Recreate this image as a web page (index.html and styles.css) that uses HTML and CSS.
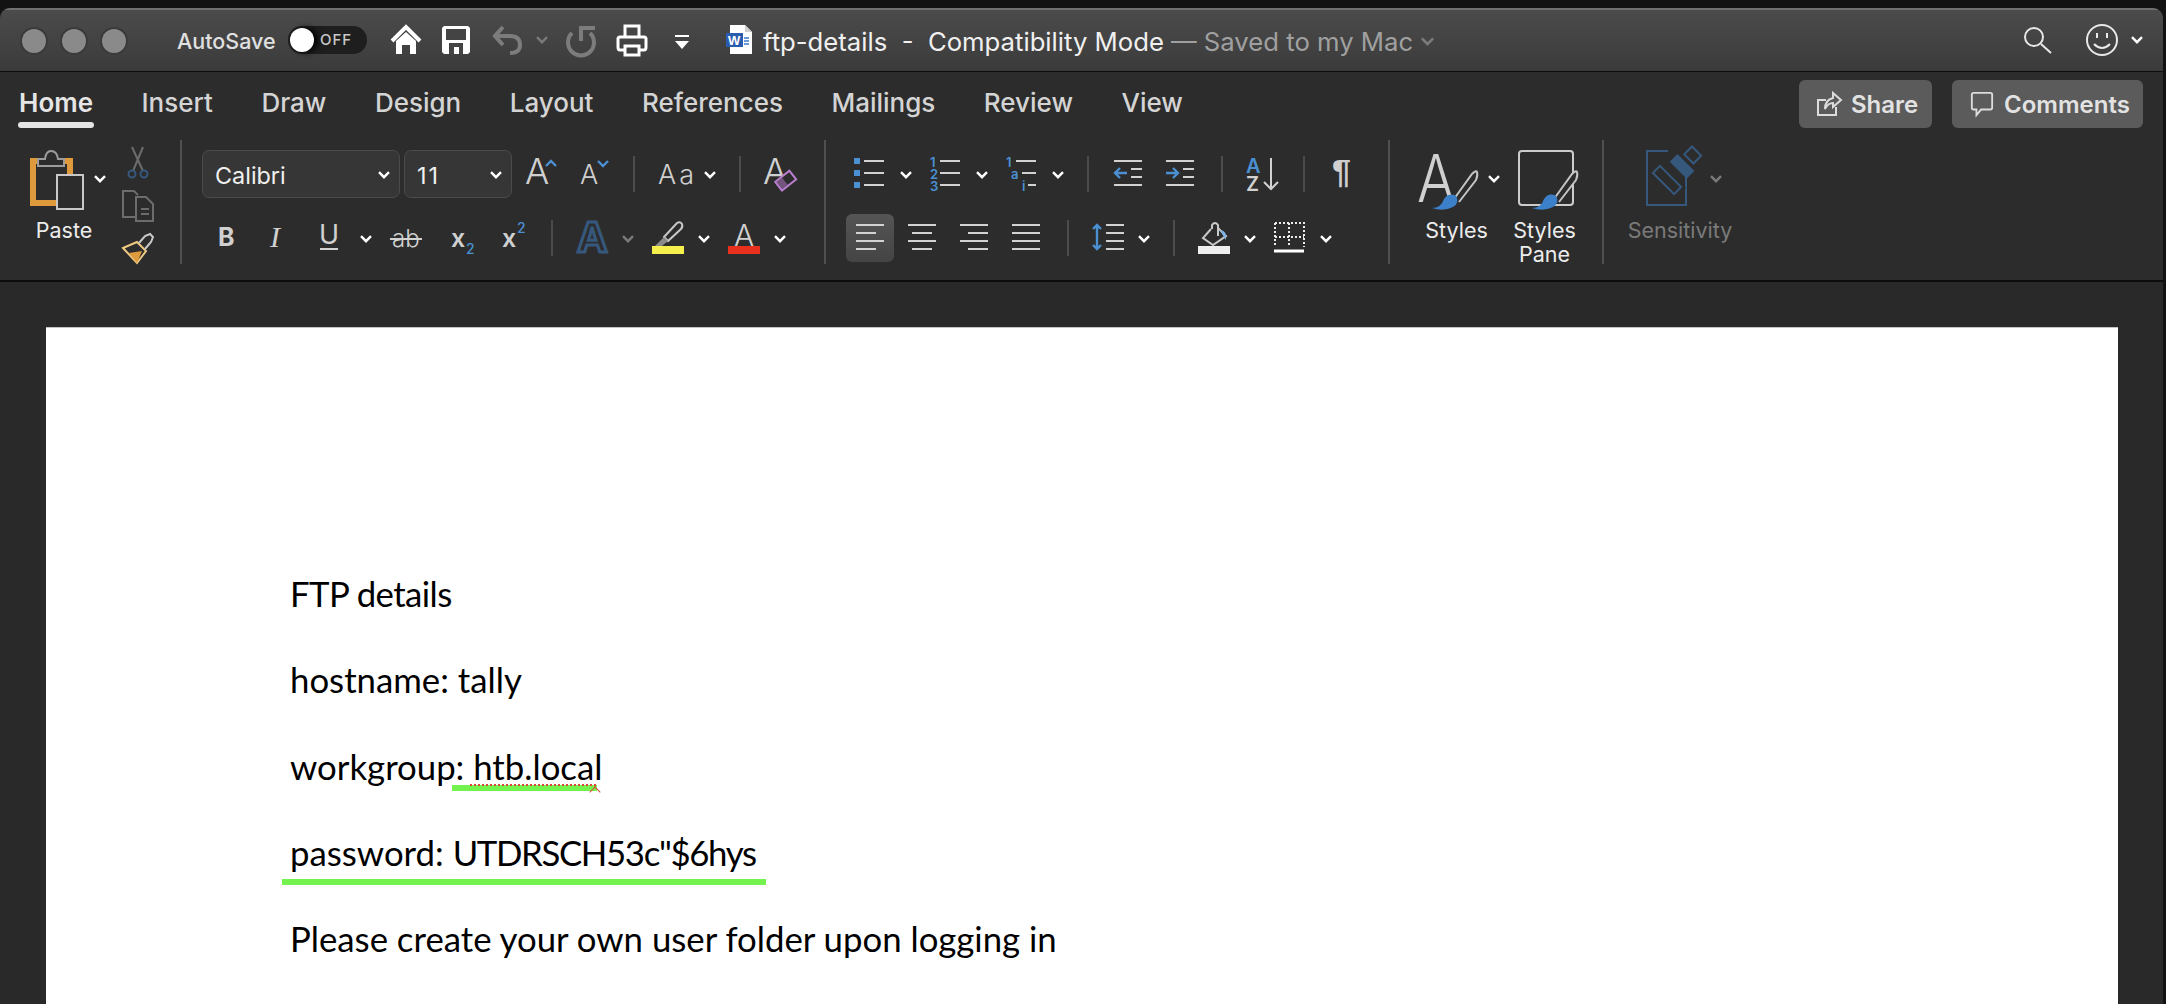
FILE: index.html
```html
<!DOCTYPE html>
<html lang="en">
<head>
	<meta charset="UTF-8">
	<title>ftp-details - Compatibility Mode</title>
	<link rel="stylesheet" href="styles.css">
</head>
<body>
	<svg class="defs" width="0" height="0">
		<symbol id="chev" viewBox="0 0 12 8"><path d="M1 1.2 L6 6.2 L11 1.2"/></symbol>
		<g id="brush">
			<path class="brush-handle" d="M1454 199 L1472 174 Q1476 170 1477 172 Q1478 175 1476 180 L1459 202"/>
			<path class="brush-head" d="M1432 208 Q1441 208 1444 199 Q1449 192 1456 196 Q1460 203 1453 207 Q1443 212 1432 208Z"/>
		</g>
	</svg>

	<div class="window">
		<header class="titlebar">
			<div class="lights"><span></span><span></span><span></span></div>
			<span class="autosave">AutoSave</span>
			<div class="toggle-cell">
				<div class="toggle"><i></i><b>OFF</b></div>
			</div>
			<svg class="tb-icon" viewBox="390 8 52 63"><path class="ic-white" d="M392 41 L406 27 L420 41"/><path class="fill-white" d="M396 41 L406 32 L416 41 V54 H410 V45 H402 V54 H396Z"/></svg>
			<svg class="tb-icon" viewBox="442 8 50 63"><path class="fill-white" d="M444 26 H468 L470 28 V52 L468 54 H444 L442 52 V28Z"/><rect class="fill-bar" x="446" y="29" width="20" height="11"/><path class="fill-bar" d="M449 54 V43 H463 V54 H459 V47 H454 V54Z"/></svg>
			<svg class="tb-icon" viewBox="492 8 74 63"><path class="ic-dim" d="M503 27 L495 36 L503 45 M496 36 H510 Q520 36 520 45 Q520 53 510 53"/><use class="chev chev-dim" href="#chev" x="536" y="36" width="12" height="8"/></svg>
			<svg class="tb-icon" viewBox="566 8 50 63"><path class="ic-dim" d="M595 28 H581 V41 M572 33 A13 13 0 1 0 590 33"/></svg>
			<svg class="tb-icon" viewBox="616 8 59 63"><path class="ic-white ic-thin" d="M625 36 V26 H639 V36 M625 50 H620 Q618 50 618 47 V39 Q618 37 620 37 H644 Q646 37 646 39 V47 Q646 50 644 50 H639 M625 46 H639 V55 H625Z"/></svg>
			<svg class="tb-icon" viewBox="675 8 51 63"><rect class="fill-white" x="675" y="35" width="14" height="2"/><path class="fill-white" d="M675 41 H689 L682 49Z"/></svg>
			<svg class="tb-icon" viewBox="726 8 37 63"><path class="fill-white" d="M730 25 H745 L752 32 V54 H730Z"/><path class="fold" d="M745 25 L752 32 H745Z"/><rect class="word-blue" x="726" y="33" width="17" height="14"/><text class="word-w" x="728" y="45">W</text><path class="word-lines" d="M744 38 H749 M744 41 H749 M744 44 H749"/></svg>
			<div class="doc-title"><span>ftp-details&nbsp; -&nbsp; Compatibility Mode</span><em>— Saved to my Mac</em>
				<svg class="title-chev"><use class="chev chev-dim" href="#chev" width="17" height="9"/></svg>
			</div>
			<svg class="tb-icon" viewBox="2024 8 62 63"><circle class="ic-thin-w" cx="2034" cy="37" r="9"/><path class="ic-thin-w" d="M2041 44 L2051 53"/></svg>
			<svg class="tb-icon" viewBox="2086 8 77 63"><circle class="ic-thin-w" cx="2102" cy="40" r="15"/><path class="ic-thin-w" d="M2097 33 V38 M2107 33 V38 M2094 44 Q2102 52 2110 44"/><use class="chev" href="#chev" x="2131" y="36" width="12" height="8"/></svg>
		</header>

		<nav class="tabs">
			<a class="tab tab-on">Home</a>
			<a class="tab">Insert</a>
			<a class="tab">Draw</a>
			<a class="tab">Design</a>
			<a class="tab">Layout</a>
			<a class="tab">References</a>
			<a class="tab">Mailings</a>
			<a class="tab">Review</a>
			<a class="tab">View</a>
			<div class="tab-btns">
				<button class="rbtn btn-share">
					<svg viewBox="0 0 24 24"><path d="M9 8 H1 V23 H19 V15 M8 17 Q8 8 16 6 V1 L24 8 L16 15 V11 Q11 11 8 17Z"/></svg>
					Share
				</button>
				<button class="rbtn btn-comments">
					<svg viewBox="0 0 24 26"><path d="M3 1 H21 Q23 1 23 3 V17 Q23 19 21 19 H11 L6 25 V19 H3 Q1 19 1 17 V3 Q1 1 3 1Z"/></svg>
					Comments
				</button>
			</div>
		</nav>

		<section class="ribbon">
			<div class="group g-clip">
				<div class="big">
					<svg class="big-icon" viewBox="0 140 122 78">
						<path class="clip-frame" d="M38 161 H33 V203 H56 M64 161 H70 V174"/>
						<path class="ic-clip" d="M38 159 H45 Q46 151 51 151 Q57 151 58 159 H64 V166 H38Z"/>
						<rect class="paper" x="57" y="175" width="26" height="34"/>
						<use class="chev" href="#chev" x="94" y="175" width="12" height="8"/>
					</svg>
					<span class="big-label">Paste</span>
				</div>
				<svg class="clip-tools" viewBox="122 140 58 124">
					<path class="ic-grey" d="M132 147 L143 171 M143 147 L133 171"/>
					<circle class="ic-sens" cx="132" cy="174" r="3.5"/><circle class="ic-sens" cx="144" cy="174" r="3.5"/>
					<path class="ic-grey" d="M135 217 H123 V191 H134 L138 195 M136 197 H146 L153 204 V221 H136Z M141 209 H149 M141 214 H149"/>
					<path class="painter" d="M123 248 L137 242 L146 251 L137 263Z"/>
					<path class="painter-fill" d="M129 253 L142 251 L137 263Z"/>
					<path class="ic-lite" d="M139 243 L145 236 L150 234 L153 237 L151 242 L145 249"/>
				</svg>
			</div>

			<div class="group g-font">
				<div class="row font-r1">
					<div class="combo combo-font">Calibri<svg class="combo-chev"><use class="chev" href="#chev" width="12" height="8"/></svg></div>
					<div class="combo combo-size"><span class="size-num">11</span><svg class="combo-chev"><use class="chev" href="#chev" width="12" height="8"/></svg></div>
					<svg viewBox="526 150 55 48"><text class="glyph thin t36" x="525" y="184">A</text><path class="ic-blue" d="M546 166 L551 161 L556 166"/></svg>
					<svg viewBox="581 150 52 48"><text class="glyph thin t27" x="580" y="184">A</text><path class="ic-blue" d="M598 161 L603 166 L608 161"/></svg>
					<span class="vsep"></span>
					<svg viewBox="659 150 80 48"><text class="glyph thin t27 spaced" x="658" y="184">Aa</text><use class="chev" href="#chev" x="704" y="171" width="12" height="8"/></svg>
					<span class="vsep"></span>
					<svg viewBox="764 150 40 48"><text class="glyph thin t36" x="763" y="184">A</text><g transform="rotate(-38 786 181)"><rect class="eraser" x="777" y="175" width="18" height="11"/><rect class="eraser-fill" x="778" y="176" width="7" height="9"/></g></svg>
				</div>
				<div class="row font-r2">
					<svg viewBox="202 214 60 48"><text class="glyph bold t25" x="218" y="246">B</text></svg>
					<svg viewBox="262 214 50 48"><text class="serif-i" x="270" y="247">I</text></svg>
					<svg viewBox="312 214 70 48"><text class="glyph t27" x="319" y="244">U</text><path class="ic-line" d="M320 249 H338"/><use class="chev" href="#chev" x="360" y="235" width="12" height="8"/></svg>
					<svg viewBox="382 214 61 48"><text class="glyph thin t24" x="392" y="247">ab</text><path class="ic-line" d="M390 239 H422"/></svg>
					<svg viewBox="443 214 52 48"><text class="glyph semi t25" x="451" y="247">x</text><text class="num t14w" x="466" y="254">2</text></svg>
					<svg viewBox="495 214 56 48"><text class="glyph semi t25" x="502" y="247">x</text><text class="num t14w" x="517" y="233">2</text></svg>
					<span class="vsep"></span>
					<svg viewBox="577 214 75 48"><text class="outline-a" x="577" y="252">A</text><use class="chev chev-dim" href="#chev" x="622" y="235" width="12" height="8"/></svg>
					<svg viewBox="652 214 76 48"><path class="ic-lite" d="M664 237 L677 223 Q680 221 682 224 Q683 227 681 229 L668 241Z"/><path class="fill-grey" d="M664 237 L668 241 L662 246 L655 246Z"/><rect class="bar-yellow" x="652" y="246" width="32" height="8"/><use class="chev" href="#chev" x="698" y="235" width="12" height="8"/></svg>
					<svg viewBox="728 214 72 48"><text class="glyph thin t30" x="734" y="246">A</text><rect class="bar-red" x="728" y="246" width="32" height="8"/><use class="chev" href="#chev" x="774" y="235" width="12" height="8"/></svg>
				</div>
			</div>

			<div class="group g-para">
				<div class="row para-r1">
					<svg viewBox="846 150 76 48"><rect class="fill-blue" x="854" y="158" width="6" height="6"/><rect class="fill-blue" x="854" y="170" width="6" height="6"/><rect class="fill-blue" x="854" y="182" width="6" height="6"/><path class="ic-line" d="M864 161 H884 M864 173 H884 M864 185 H884"/><use class="chev" href="#chev" x="900" y="171" width="12" height="8"/></svg>
					<svg viewBox="922 150 78 48"><text class="num t14" x="930" y="167">1</text><text class="num t14" x="930" y="179">2</text><text class="num t14" x="930" y="191">3</text><path class="ic-line" d="M940 161 H960 M940 173 H960 M940 185 H960"/><use class="chev" href="#chev" x="976" y="171" width="12" height="8"/></svg>
					<svg viewBox="1000 150 87 48"><text class="num t14" x="1006" y="167">1</text><text class="num t14" x="1011" y="179">a</text><text class="num t14" x="1022" y="191">i</text><path class="ic-line" d="M1016 161 H1036 M1022 173 H1036 M1028 185 H1036"/><use class="chev" href="#chev" x="1052" y="171" width="12" height="8"/></svg>
					<span class="vsep"></span>
					<svg viewBox="1113 150 52 48"><path class="ic-line" d="M1114 161 H1142 M1131 169 H1142 M1131 177 H1142 M1114 185 H1142"/><path class="ic-blue" d="M1127 173 H1115 M1120 168 L1115 173 L1120 178"/></svg>
					<svg viewBox="1165 150 56 48"><path class="ic-line" d="M1166 161 H1194 M1183 169 H1194 M1183 177 H1194 M1166 185 H1194"/><path class="ic-blue" d="M1166 173 H1178 M1173 168 L1178 173 L1173 178"/></svg>
					<span class="vsep"></span>
					<svg viewBox="1246 150 57 48"><text class="sort-a" x="1246" y="173">A</text><text class="sort-z" x="1246" y="191">Z</text><path class="ic-line" d="M1271 158 V189 M1264 182 L1271 189 L1278 182"/></svg>
					<span class="vsep"></span>
					<svg viewBox="1334 150 55 48"><text class="pilcrow" x="1332" y="183">¶</text></svg>
				</div>
				<div class="row para-r2">
					<div class="align-on"><svg viewBox="846 214 48 48"><path class="ic-line" d="M856 225 H884 M856 233 H876 M856 241 H884 M856 249 H876"/></svg></div>
					<svg viewBox="898 214 52 48"><path class="ic-line" d="M908 225 H936 M912 233 H932 M908 241 H936 M912 249 H932"/></svg>
					<svg viewBox="950 214 52 48"><path class="ic-line" d="M960 225 H988 M968 233 H988 M960 241 H988 M968 249 H988"/></svg>
					<svg viewBox="1002 214 65 48"><path class="ic-line" d="M1012 225 H1040 M1012 233 H1040 M1012 241 H1040 M1012 249 H1040"/></svg>
					<span class="vsep"></span>
					<svg viewBox="1092 214 81 48"><path class="ic-blue" d="M1097 225 V249 M1093 229 L1097 225 L1101 229 M1093 245 L1097 249 L1101 245"/><path class="ic-line" d="M1106 225 H1124 M1106 233 H1124 M1106 241 H1124 M1106 249 H1124"/><use class="chev" href="#chev" x="1138" y="235" width="12" height="8"/></svg>
					<span class="vsep"></span>
					<svg viewBox="1198 214 72 48"><path class="ic-lite" d="M1212 229 V225 Q1215 221 1218 225 V236 M1211 229 L1203 238 L1213 245 L1226 236 L1218 228"/><path class="drop" d="M1220 230 Q1227 230 1226 240 Q1223 236 1220 230Z"/><rect class="bar-white" x="1198" y="246" width="32" height="8"/><use class="chev" href="#chev" x="1244" y="235" width="12" height="8"/></svg>
					<svg viewBox="1270 214 70 48"><path class="dots" d="M1275 223 H1304 V247 M1275 223 V247 M1275 237 H1304 M1289 223 V247"/><path class="ic-white ic-thin" d="M1274 251 H1304"/><use class="chev" href="#chev" x="1320" y="235" width="12" height="8"/></svg>
				</div>
			</div>

			<div class="group g-styles">
				<div class="big big-styles">
					<svg class="big-icon" viewBox="1390 140 120 78">
						<text class="glyph thin t66" x="1417" y="202" textLength="38" lengthAdjust="spacingAndGlyphs">A</text>
						<use href="#brush"/>
						<use class="chev" href="#chev" x="1488" y="175" width="12" height="8"/>
					</svg>
					<span class="big-label">Styles</span>
				</div>
				<div class="big big-pane">
					<svg class="big-icon" viewBox="1510 140 92 78">
						<rect class="pane" x="1519" y="151" width="54" height="54" rx="3"/>
						<use href="#brush" x="100"/>
					</svg>
					<span class="big-label">Styles<br>Pane</span>
				</div>
			</div>

			<div class="group g-sens">
				<div class="big big-sens">
					<svg class="big-icon" viewBox="1604 140 152 78">
						<path class="ic-sens" d="M1668 151 H1647 V205 H1686 V172"/>
						<g transform="rotate(45 1667 180)">
							<rect class="sens-bg" x="1648" y="172" width="38" height="16"/>
							<rect class="ic-sens" x="1652" y="175" width="30" height="10"/>
						</g>
						<g transform="rotate(45 1681 166)">
							<rect class="fill-sens" x="1670" y="160" width="24" height="11"/>
						</g>
						<g transform="rotate(45 1692 155)">
							<rect class="ic-sens" x="1686" y="149" width="13" height="11"/>
						</g>
						<use class="chev chev-dim" href="#chev" x="1710" y="175" width="12" height="8"/>
					</svg>
					<span class="big-label label-dim">Sensitivity</span>
				</div>
			</div>
		</section>

		<main class="workspace">
			<article class="page">
				<p class="line line-ftp">FTP details</p>
				<p class="line">hostname: tally</p>
				<p class="line">workgroup: htb.local<span class="mark mark-a"></span><span class="squig"></span></p>
				<p class="line">password: <span class="pw">UTDRSCH53c"$6hys</span><span class="mark mark-b"></span></p>
				<p class="line">Please create your own user folder upon logging in</p>
			</article>
		</main>
	</div>
</body>
</html>
```

FILE: styles.css
```css
*{
	margin: 0;
	padding: 0;
	box-sizing: border-box;
}
html, body{
	height: 100%;
	overflow: hidden;
}
body{
	background-color: #121212;
	font-family: Inter, "Liberation Sans", sans-serif;
	padding-top: 8px;
}
.defs{
	position: absolute;
}
svg{
	display: block;
	overflow: visible;
}
.window{
	width: 2163px;
	height: 996px;
	display: flex;
	flex-direction: column;
	background-color: #2c2c2c;
	border-radius: 10px 10px 0 0;
	overflow: hidden;
}

/* title bar */
.titlebar{
	height: 64px;
	display: grid;
	grid-template-columns: 155px 111px 102px 52px 50px 74px 50px 59px 51px 37px 1fr 62px 77px;
	align-items: center;
	padding-left: 22px;
	background: linear-gradient(#4b4b4b, #3b3b3b);
	border-top: 2px solid #707070;
	border-bottom: 1px solid #0c0c0c;
}
.tb-icon{
	width: 100%;
	height: 63px;
	margin-top: -2px;
}
.lights{
	display: flex;
	gap: 16px;
}
.lights span{
	width: 24px;
	height: 24px;
	border-radius: 50%;
	background-color: #8a8a8a;
	box-shadow: 0 0 0 2px #3a3a3a;
}
.autosave{
	font-size: 21.5px;
	font-weight: 500;
	color: #e0e0e0;
}
.toggle-cell{
	margin-top: -2px;
}
.toggle{
	width: 79px;
	height: 28px;
	border-radius: 14px;
	background-color: #1e1e1e;
	display: flex;
	align-items: center;
	padding-left: 2px;
}
.toggle i{
	width: 24px;
	height: 24px;
	border-radius: 50%;
	background-color: #fff;
	box-shadow: 4px 0 6px #000;
}
.toggle b{
	font-size: 15px;
	font-weight: 500;
	color: #c8c8c8;
	margin-left: 6px;
	letter-spacing: 1px;
}
.doc-title{
	display: flex;
	align-items: center;
	white-space: pre;
	font-size: 25.7px;
	color: #f0f0f0;
	margin-top: 1px;
}
.doc-title em{
	font-style: normal;
	color: #a0a0a0;
	margin-left: 7px;
}
.title-chev{
	width: 17px;
	height: 9px;
	margin-left: 6px;
}

/* tabs */
.tabs{
	height: 68px;
	display: flex;
	align-items: flex-start;
	gap: 48.5px;
	padding: 16px 20px 0 19px;
}
.tab{
	position: relative;
	font-size: 26px;
	font-weight: 500;
	line-height: 30px;
	color: #d4d4d4;
}
.tab-on{
	font-weight: 600;
	color: #e6e6e6;
}
.tab-on::after{
	content: "";
	position: absolute;
	left: -1px;
	right: -1px;
	top: 34px;
	height: 6px;
	border-radius: 3px;
	background-color: #e4e4e4;
}
.tab-btns{
	display: flex;
	gap: 20px;
	margin-left: auto;
	margin-top: -8px;
}
.rbtn{
	height: 48px;
	display: flex;
	align-items: center;
	gap: 10px;
	border: none;
	border-radius: 6px;
	background-color: #5b5b5b;
	color: #e2e2e2;
	font-family: inherit;
	font-size: 24px;
	font-weight: 600;
}
.rbtn svg{
	width: 24px;
	height: 24px;
}
.rbtn path{
	fill: none;
	stroke: #dcdcdc;
	stroke-width: 2;
}
.btn-share{
	width: 133px;
	padding-left: 18px;
}
.btn-comments{
	width: 191px;
	padding-left: 18px;
}

/* ribbon */
.ribbon{
	height: 142px;
	display: flex;
	padding-bottom: 16px;
	border-bottom: 2px solid #0c0c0c;
}
.group{
	height: 124px;
	border-right: 2px solid #505050;
}
.g-clip{
	width: 182px;
	display: grid;
	grid-template-columns: 122px 58px;
}
.g-font{
	width: 644px;
	padding: 10px 0 0 20px;
}
.g-para{
	width: 564px;
	padding: 10px 0 0 20px;
}
.g-styles{
	width: 214px;
	display: grid;
	grid-template-columns: 120px 92px;
}
.g-sens{
	width: 152px;
	border-right: none;
}
.row{
	display: grid;
	height: 48px;
	align-items: center;
}
.row + .row{
	margin-top: 16px;
}
.row > svg{
	width: 100%;
	height: 48px;
}
.font-r1{
	grid-template-columns: 202px 122px 55px 52px 26px 80px 25px 40px;
}
.font-r2{
	grid-template-columns: 60px 50px 70px 61px 52px 56px 26px 75px 76px 72px;
}
.para-r1{
	grid-template-columns: 76px 78px 87px 26px 52px 56px 25px 57px 31px 55px;
}
.para-r2{
	grid-template-columns: 52px 52px 52px 65px 25px 81px 25px 72px 70px;
}
.vsep{
	width: 2px;
	height: 36px;
	background-color: #4c4c4c;
}
.combo{
	height: 48px;
	display: flex;
	align-items: center;
	justify-content: space-between;
	padding: 2px 9px 0 12px;
	font-size: 23.4px;
	color: #f0f0f0;
	background-color: #363636;
	border: 1.5px solid #4b4b4b;
	border-radius: 7px;
}
.combo-font{
	width: 198px;
}
.combo-size{
	width: 108px;
}
.size-num{
	letter-spacing: 2px;
}
.combo-chev{
	width: 12px;
	height: 8px;
}
.big{
	display: flex;
	flex-direction: column;
}
.big-icon{
	width: 100%;
	height: 78px;
}
.big-label{
	font-size: 21.5px;
	font-weight: 400;
	line-height: 24px;
	color: #ececec;
	text-align: center;
}
.g-clip .big-label{
	padding-left: 6px;
}
.big-styles .big-label{
	padding-left: 13px;
}
.big-pane .big-label{
	padding-right: 23px;
}
.label-dim{
	color: #7a7a7a;
}
.align-on{
	width: 48px;
	height: 48px;
	border-radius: 6px;
	background: linear-gradient(#555, #444);
}
.align-on svg{
	width: 48px;
	height: 48px;
}

/* icon paint */
.chev path, .chev{
	fill: none;
	stroke: #fff;
	stroke-width: 2.4;
}
.chev-dim{
	stroke: #7a7a7a;
}
.ic-white{
	fill: none;
	stroke: #fff;
	stroke-width: 4;
}
.ic-thin{
	stroke-width: 3;
}
.ic-thin-w{
	fill: none;
	stroke: #e8e8e8;
	stroke-width: 2;
}
.fill-white{
	fill: #fff;
}
.fill-bar{
	fill: #444;
}
.fold{
	fill: #cfcfcf;
}
.word-blue{
	fill: #2a5cb0;
}
.word-w{
	font: 700 13px "Liberation Sans", sans-serif;
	fill: #fff;
}
.word-lines{
	stroke: #3b7bd0;
	stroke-width: 1.5;
}
.ic-dim{
	fill: none;
	stroke: #7c7c7c;
	stroke-width: 4;
}
.ic-grey{
	fill: none;
	stroke: #6c6c6c;
	stroke-width: 2;
}
.ic-lite{
	fill: none;
	stroke: #c8c8c8;
	stroke-width: 2;
}
.ic-line{
	fill: none;
	stroke: #d2d2d2;
	stroke-width: 2;
}
.ic-blue{
	fill: none;
	stroke: #4a90d2;
	stroke-width: 2.4;
}
.ic-sens{
	fill: none;
	stroke: #36587c;
	stroke-width: 2;
}
.fill-sens{
	fill: #36587c;
}
.sens-bg{
	fill: #2c2c2c;
}
.fill-blue{
	fill: #4a90d2;
}
.fill-grey{
	fill: #8a8a8a;
}
.clip-frame{
	fill: none;
	stroke: #e09a3e;
	stroke-width: 6;
}
.ic-clip{
	fill: #2c2c2c;
	stroke: #9c9c9c;
	stroke-width: 2;
}
.paper{
	fill: #2c2c2c;
	stroke: #c8c8c8;
	stroke-width: 2;
}
.painter{
	fill: none;
	stroke: #ecc780;
	stroke-width: 2;
}
.painter-fill{
	fill: #e09a3e;
}
.eraser{
	fill: #2c2c2c;
	stroke: #b87ccc;
	stroke-width: 2;
}
.eraser-fill{
	fill: #b87ccc;
	opacity: .5;
}
.bar-yellow{
	fill: #f6f04e;
}
.bar-red{
	fill: #e8301f;
}
.bar-white{
	fill: #eeeeee;
}
.drop{
	fill: #7fb4e4;
}
.dots{
	fill: none;
	stroke: #ececec;
	stroke-width: 2;
	stroke-dasharray: 2 2;
}
.pane{
	fill: none;
	stroke: #cccccc;
	stroke-width: 2;
}
.brush-handle{
	fill: #2c2c2c;
	stroke: #c4c4c4;
	stroke-width: 2;
}
.brush-head{
	fill: #3b80c8;
}

/* letters inside the icons */
.glyph{
	font-family: Inter, "Liberation Sans", sans-serif;
	fill: #d0d0d0;
}
.thin{
	font-weight: 300;
}
.bold{
	font-weight: 700;
}
.semi{
	font-weight: 600;
}
.spaced{
	letter-spacing: 3px;
}
.t24{
	font-size: 24px;
}
.t25{
	font-size: 25px;
}
.t27{
	font-size: 27px;
}
.t30{
	font-size: 30px;
}
.t36{
	font-size: 36px;
}
.t66{
	font-size: 66px;
}
.num{
	font-family: Inter, "Liberation Sans", sans-serif;
	font-weight: 600;
	fill: #4a90d2;
}
.t14{
	font-size: 13px;
}
.t14w{
	font-size: 14px;
	font-weight: 500;
}
.serif-i{
	font: italic 400 30px "Liberation Serif", serif;
	fill: #d0d0d0;
}
.outline-a{
	font: 700 41px Inter, "Liberation Sans", sans-serif;
	fill: #2c2c2c;
	stroke: #36587c;
	stroke-width: 3;
}
.sort-a{
	font: 600 20px Inter, "Liberation Sans", sans-serif;
	fill: #4a90d2;
}
.sort-z{
	font: 600 20px Inter, "Liberation Sans", sans-serif;
	fill: #d0d0d0;
}
.pilcrow{
	font: 700 34px "Liberation Sans", sans-serif;
	fill: #cfcfcf;
}

/* document */
.workspace{
	flex: 1;
	padding: 45px 45px 0 46px;
	background-color: #292929;
}
.page{
	height: 100%;
	padding: 223px 0 0 244px;
	background-color: #fff;
	border-top: 1px solid #c4c4c4;
}
.line{
	position: relative;
	font-family: Lato, "Liberation Sans", sans-serif;
	font-size: 34.75px;
	line-height: 86.3px;
	color: #000;
	white-space: nowrap;
}
.line-ftp{
	letter-spacing: -.58px;
}
.pw{
	letter-spacing: -1.35px;
}
.mark{
	position: absolute;
	height: 6px;
	background-color: #74f24e;
}
.mark-a{
	left: 162px;
	top: 61px;
	width: 145px;
}
.mark-b{
	left: -8px;
	top: 69px;
	width: 484px;
}
.squig{
	position: absolute;
	left: 180px;
	top: 60px;
	width: 126px;
	height: 2px;
	border-top: 2px dotted #e0443a;
}
.squig::after{
	content: "";
	position: absolute;
	left: 121px;
	top: 2px;
	width: 7px;
	height: 7px;
	border-top: 1.5px solid #e0443a;
	border-left: 1.5px solid #e0443a;
	transform: rotate(45deg);
}
```
